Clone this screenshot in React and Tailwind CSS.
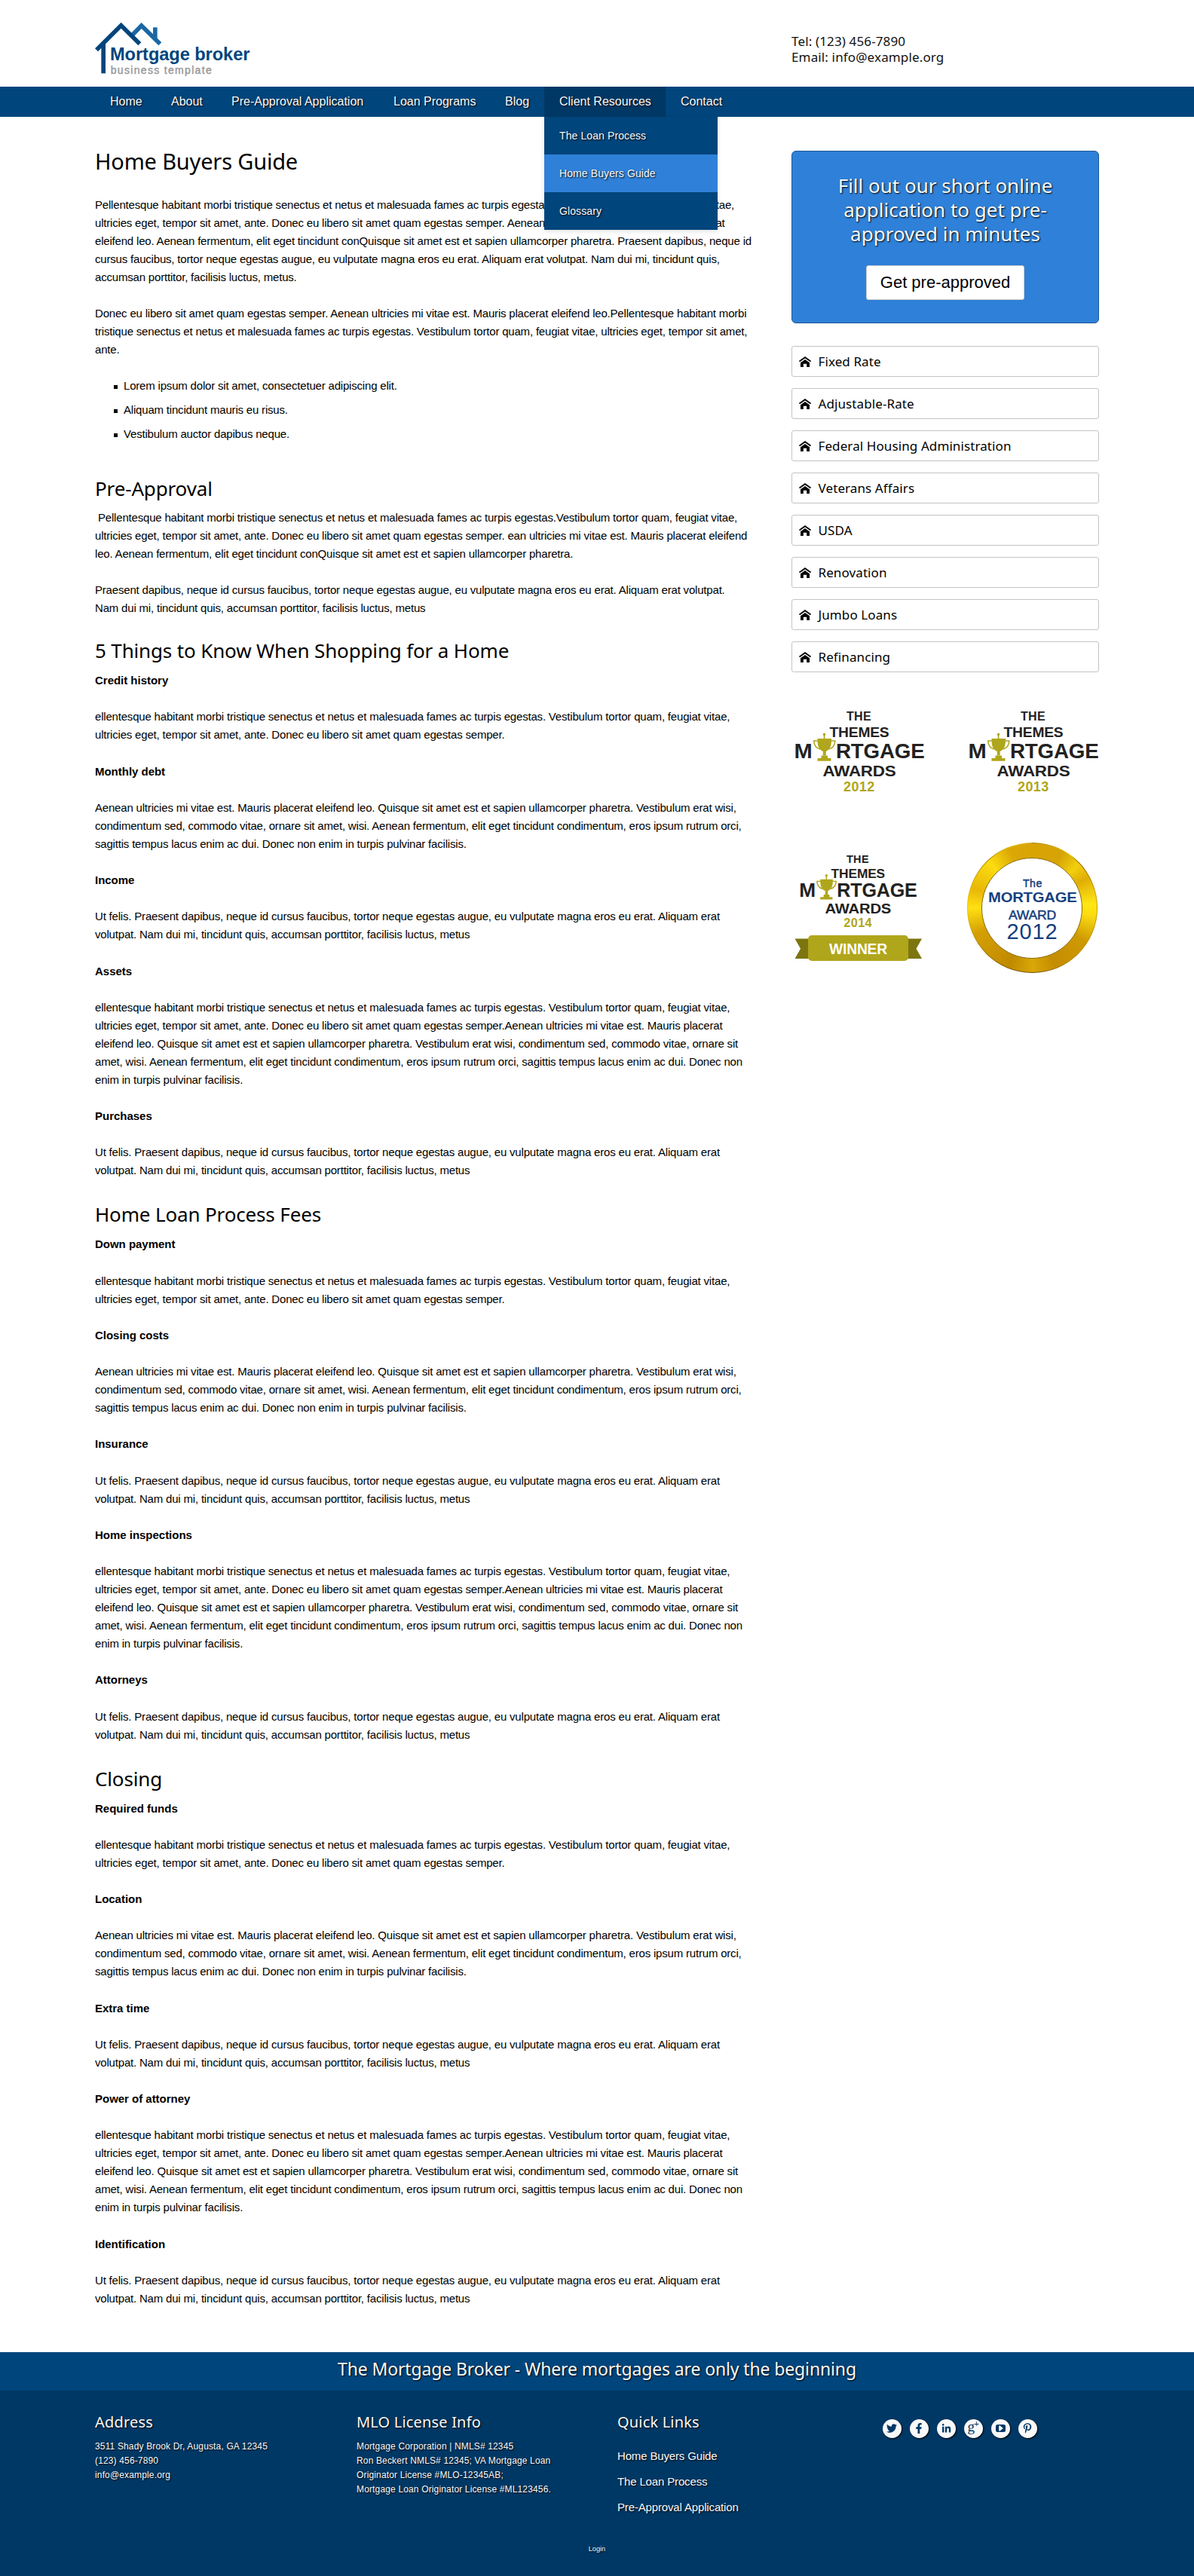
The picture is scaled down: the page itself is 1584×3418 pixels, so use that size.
import React from "react";
import { FaTwitter, FaFacebookF, FaLinkedinIn, FaPinterestP } from "react-icons/fa";

const NAV = [
  { label: "Home", cls: "w-[81px]" },
  { label: "About", cls: "w-[80px]" },
  { label: "Pre-Approval Application", cls: "w-[215px]" },
  { label: "Loan Programs", cls: "w-[148px]" },
  { label: "Blog", cls: "w-[72px]" },
  { label: "Client Resources", cls: "w-[161px] bg-[#003865]", open: true },
  { label: "Contact", cls: "w-[97px]" },
];

const FAMES = [
  "ellentesque habitant morbi tristique senectus et netus et malesuada fames ac turpis egestas. Vestibulum tortor quam, feugiat vitae,",
  "ultricies eget, tempor sit amet, ante. Donec eu libero sit amet quam egestas semper.",
];
const AENEAN = [
  "Aenean ultricies mi vitae est. Mauris placerat eleifend leo. Quisque sit amet est et sapien ullamcorper pharetra. Vestibulum erat wisi,",
  "condimentum sed, commodo vitae, ornare sit amet, wisi. Aenean fermentum, elit eget tincidunt condimentum, eros ipsum rutrum orci,",
  "sagittis tempus lacus enim ac dui. Donec non enim in turpis pulvinar facilisis.",
];
const FELIS = [
  "Ut felis. Praesent dapibus, neque id cursus faucibus, tortor neque egestas augue, eu vulputate magna eros eu erat. Aliquam erat",
  "volutpat. Nam dui mi, tincidunt quis, accumsan porttitor, facilisis luctus, metus",
];
const LONG = [
  "ellentesque habitant morbi tristique senectus et netus et malesuada fames ac turpis egestas. Vestibulum tortor quam, feugiat vitae,",
  "ultricies eget, tempor sit amet, ante. Donec eu libero sit amet quam egestas semper.Aenean ultricies mi vitae est. Mauris placerat",
  "eleifend leo. Quisque sit amet est et sapien ullamcorper pharetra. Vestibulum erat wisi, condimentum sed, commodo vitae, ornare sit",
  "amet, wisi. Aenean fermentum, elit eget tincidunt condimentum, eros ipsum rutrum orci, sagittis tempus lacus enim ac dui. Donec non",
  "enim in turpis pulvinar facilisis.",
];
const BODIES = [FAMES, AENEAN, FELIS, LONG, FELIS];

const SECTIONS = [
  { title: "5 Things to Know When Shopping for a Home", cls: "mt-[26px]", items: ["Credit history", "Monthly debt", "Income", "Assets", "Purchases"] },
  { title: "Home Loan Process Fees", cls: "mt-7", items: ["Down payment", "Closing costs", "Insurance", "Home inspections", "Attorneys"] },
  { title: "Closing", cls: "mt-7", items: ["Required funds", "Location", "Extra time", "Power of attorney", "Identification"] },
];

const PROGRAMS = ["Fixed Rate", "Adjustable-Rate", "Federal Housing Administration", "Veterans Affairs", "USDA", "Renovation", "Jumbo Loans", "Refinancing"];

const SHADOW = "[text-shadow:1px_1px_2px_#000]";

function Logo() {
  return (
    <svg width="214" height="73" viewBox="78 84 642 219" className="block" fontFamily="Liberation Sans, sans-serif">
      <g fill="none" strokeWidth="17">
        <path d="M228 138 263 102 337 175" stroke="#1a67a5" />
        <path d="M317.500 109V158" stroke="#1a67a5" />
        <path d="M84 199 182 101 256 175" stroke="#00457c" />
        <path d="M111.500 174V292" stroke="#00457c" />
      </g>
      <text x="138" y="241" fontSize="70" fontWeight="700" fill="#00457c" textLength="556" lengthAdjust="spacingAndGlyphs">Mortgage broker</text>
      <text x="140" y="293" fontSize="42" fill="#999" stroke="#999" strokeWidth="1.2" textLength="402">business template</text>
    </svg>
  );
}

function Lines({ lines, className = "" }) {
  return (
    <p className={"whitespace-nowrap " + className}>
      {lines.map((l, i) => (
        <span key={i} className="block">{l}</span>
      ))}
    </p>
  );
}

function H2({ children, className }) {
  return <h2 className={"font-['Noto_Sans',sans-serif] text-[26px] leading-9 tracking-[-0.15px] " + className}>{children}</h2>;
}

function HouseIcon() {
  return (
    <svg width="16" height="14" viewBox="0 0 16 14" className="block">
      <path d="M.5 6.600 8 1.200l7.500 5.400" fill="none" stroke="#000" strokeWidth="1.900" />
      <path d="M2 8.300 8 4l6 4.300V14h-3.800v-4.200H5.800V14H2z" fill="#000" />
    </svg>
  );
}

function AwardArt({ year }) {
  return (
    <g fontWeight="700" fill="#222">
      <text x="68" y="16" fontSize="16" textLength="32.500">THE</text>
      <text x="45.500" y="38" fontSize="19" textLength="79" lengthAdjust="spacingAndGlyphs">THEMES</text>
      <text x="-1.500" y="65.700" fontSize="27.500" textLength="24" lengthAdjust="spacingAndGlyphs">M</text>
      <text x="54" y="65.700" fontSize="27.500" textLength="117.500" lengthAdjust="spacingAndGlyphs">RTGAGE</text>
      <text x="36.500" y="89.700" fontSize="21" textLength="97" lengthAdjust="spacingAndGlyphs">AWARDS</text>
      <text x="64" y="109.700" fontSize="18" fill="#b0a61c" textLength="41">{year}</text>
      <g fill="#b0a61c">
        <circle cx="38.500" cy="34.500" r="1.800" />
        <rect x="37.700" y="35" width="1.700" height="6" />
        <path d="M29.500 40h18.500c.3 9-1.500 14.500-7.300 17v5.500h-3.900V57c-5.800-2.500-7.600-8-7.300-17z" />
        <path d="M31 43h-6.300c.3 6.500 3 9.600 8 11M46.500 43h6.300c-.3 6.500-3 9.600-8 11" fill="none" stroke="#b0a61c" strokeWidth="1.600" />
        <path d="M34.500 62.500h8.500v3.500h4.500v3.800H29.500V66h5z" />
      </g>
    </g>
  );
}

function Award({ year, winner }) {
  return (
    <svg width="177" height={winner ? 176 : 120} viewBox={winner ? "0 0 177 176" : "0 0 177 120"} className="block overflow-visible" fontFamily="Liberation Sans, sans-serif">
      {winner ? (
        <>
          <g transform="translate(6.500 10.500) scale(.904)">
            <AwardArt year={year} />
          </g>
          <path d="M-.5 125.500H20v26.500H-.5l7.500-13.200zM168 125.500H148v26.500h20l-7.500-13.200z" fill="#7d750f" />
          <rect x="17" y="121" width="133" height="34" rx="5" fill="#b0a61c" />
          <text x="45" y="145.700" fontSize="19.500" fontWeight="700" fill="#fff" textLength="77" lengthAdjust="spacingAndGlyphs">WINNER</text>
        </>
      ) : (
        <AwardArt year={year} />
      )}
    </svg>
  );
}

function Medal() {
  return (
    <div className="w-[173px] h-[173px] rounded-full p-px bg-[conic-gradient(#a87a00,#e6c400_10%,#8a6400_13%,#caa000_22%,#b98a00_40%,#6e4f00_50%,#9a7000_62%,#e8c800_75%,#b98c00_88%,#e8cc20_96%,#c8a010)]">
      <div className="h-full rounded-full p-[18.500px] bg-[conic-gradient(#d9a404,#d6a406_8%,#f2cf0e_13%,#e0ad06_17%,#ffe714_24%,#fbdc10_27%,#cf9902_34%,#c48d02_44%,#d9a806_50%,#c08a00_56%,#cb9502_62%,#d49e04_68%,#ffe012_75%,#e8b808_80%,#fbdc10_88%,#dba806_94%,#d9a404)]">
        <div className="h-full rounded-full border-[1.500px] border-[#8a6a08] bg-white overflow-hidden">
          <svg viewBox="1303 1138.300 132 132" className="block w-full h-full" fill="#15407f" fontFamily="Liberation Sans, sans-serif">
            <text x="1357" y="1176.700" fontSize="14" stroke="#15407f" strokeWidth=".5" textLength="25">The</text>
            <text x="1311" y="1196" fontSize="18.500" fontWeight="700" textLength="117.500" lengthAdjust="spacingAndGlyphs">MORTGAGE</text>
            <text x="1338" y="1219" fontSize="17" stroke="#15407f" strokeWidth=".5" textLength="63" lengthAdjust="spacingAndGlyphs">AWARD</text>
            <text x="1335.500" y="1245" fontSize="29" textLength="67">2012</text>
          </svg>
        </div>
      </div>
    </div>
  );
}

function GooglePlus() {
  return (
    <span className="font-['Liberation_Serif',serif] text-[19px] leading-none -mt-1.5 flex">
      g<span className="text-[12px] font-bold -ml-px">+</span>
    </span>
  );
}

function YouTube() {
  return (
    <svg width="13" height="10" viewBox="0 0 13 10">
      <rect width="13" height="10" rx="2.500" fill="currentColor" />
      <path d="M4.700 1.800h.6l4 3.200-4 3.200h-.6z" fill="#f9f9f9" stroke="#f9f9f9" />
    </svg>
  );
}

const SOCIAL = [
  <FaTwitter size={14} />,
  <FaFacebookF size={14} />,
  <FaLinkedinIn size={13} />,
  <GooglePlus />,
  <YouTube />,
  <FaPinterestP size={14} />,
];

function FooterHead({ children }) {
  return <h3 className="font-['Noto_Sans',sans-serif] text-[20px] leading-7 tracking-[0.18px]">{children}</h3>;
}

export default function App() {
  return (
    <div className="w-[1584px] h-[3418px] bg-white text-black font-['Liberation_Sans',Arial,sans-serif] text-[15px] leading-6 tracking-[-0.19px] overflow-hidden">
      <header className="h-[115px] pl-[126px] flex">
        <div className="w-[924px] pt-7">
          <Logo />
        </div>
        <div className="pt-[44px] font-['Noto_Sans',sans-serif] text-[17px] leading-[21px] tracking-[0.14px] text-[#111]">
          <div>Tel: (123) 456-7890</div>
          <div>Email: info@example.org</div>
        </div>
      </header>

      <nav className="h-10 bg-[#00457c] pl-[126px] flex text-[#f9f9f9] text-[16px] leading-[39px] tracking-normal">
        {NAV.map((n) => (
          <div key={n.label} className={"relative h-10 pl-5 whitespace-nowrap " + n.cls}>
            <span className={SHADOW}>{n.label}</span>
            {n.open && (
              <div className="absolute left-0 top-10 w-[230px] z-10 text-[14px] leading-[50px] tracking-[0.1px] [text-shadow:1px_1px_2px_#000] bg-[#00457c] shadow-[0_2px_6px_rgba(0,0,0,0.12)]">
                <div className="h-[50px] px-5">The Loan Process</div>
                <div className="h-[50px] px-5 bg-[#2f80d8]">Home Buyers Guide</div>
                <div className="h-[50px] px-5">Glossary</div>
              </div>
            )}
          </div>
        ))}
      </nav>

      <div className="h-[2966px] pl-[126px] flex">
        <main className="w-[924px] pt-[39px]">
          <h1 className="font-['Noto_Sans',sans-serif] text-[29px] leading-10 tracking-[-0.18px]">Home Buyers Guide</h1>
          <Lines
            className="mt-[26px]"
            lines={[
              "Pellentesque habitant morbi tristique senectus et netus et malesuada fames ac turpis egestas.Vestibulum tortor quam, feugiat vitae,",
              "ultricies eget, tempor sit amet, ante. Donec eu libero sit amet quam egestas semper. Aenean ultricies mi vitae est. Mauris placerat",
              "eleifend leo. Aenean fermentum, elit eget tincidunt conQuisque sit amet est et sapien ullamcorper pharetra. Praesent dapibus, neque id",
              "cursus faucibus, tortor neque egestas augue, eu vulputate magna eros eu erat. Aliquam erat volutpat. Nam dui mi, tincidunt quis,",
              "accumsan porttitor, facilisis luctus, metus.",
            ]}
          />
          <Lines
            className="mt-6"
            lines={[
              "Donec eu libero sit amet quam egestas semper. Aenean ultricies mi vitae est. Mauris placerat eleifend leo.Pellentesque habitant morbi",
              "tristique senectus et netus et malesuada fames ac turpis egestas. Vestibulum tortor quam, feugiat vitae, ultricies eget, tempor sit amet,",
              "ante.",
            ]}
          />
          <ul className="mt-6 pl-[25px] flex flex-col gap-2">
            {["Lorem ipsum dolor sit amet, consectetuer adipiscing elit.", "Aliquam tincidunt mauris eu risus.", "Vestibulum auctor dapibus neque."].map((t) => (
              <li key={t} className="flex items-center gap-[8px]">
                <span className="w-[5px] h-[5px] bg-black mt-[3px]" />
                {t}
              </li>
            ))}
          </ul>

          <H2 className="mt-[42px] mb-[9px]">Pre-Approval</H2>
          <Lines
            lines={[
              "\u00a0Pellentesque habitant morbi tristique senectus et netus et malesuada fames ac turpis egestas.Vestibulum tortor quam, feugiat vitae,",
              "ultricies eget, tempor sit amet, ante. Donec eu libero sit amet quam egestas semper. ean ultricies mi vitae est. Mauris placerat eleifend",
              "leo. Aenean fermentum, elit eget tincidunt conQuisque sit amet est et sapien ullamcorper pharetra.",
            ]}
          />
          <Lines
            className="mt-6"
            lines={[
              "Praesent dapibus, neque id cursus faucibus, tortor neque egestas augue, eu vulputate magna eros eu erat. Aliquam erat volutpat.",
              "Nam dui mi, tincidunt quis, accumsan porttitor, facilisis luctus, metus",
            ]}
          />

          {SECTIONS.map((s) => (
            <section key={s.title}>
              <H2 className={"mb-2.5 " + s.cls}>{s.title}</H2>
              <div className="flex flex-col gap-[24.25px]">
                {s.items.map((t, i) => (
                  <div key={t}>
                    <h4 className="font-bold tracking-[-0.02px]">{t}</h4>
                    <Lines className="mt-[24.25px]" lines={BODIES[i]} />
                  </div>
                ))}
              </div>
            </section>
          ))}
        </main>

        <aside className="w-[408px] pt-[45px]">
          <div className="h-[229px] rounded-[6px] border border-[#1b5796] bg-[#2f80d8] pt-[29px] text-center">
            <div className="font-['Noto_Sans',sans-serif] text-[26px] leading-8 tracking-normal text-[#f9f9f9] [text-shadow:1px_1px_2px_#000]">
              <div>Fill out our short online</div>
              <div>application to get pre-</div>
              <div>approved in minutes</div>
            </div>
            <button className="mt-[26px] w-[210px] h-[46px] bg-white border border-[#ccc] rounded-[3px] text-[22px] tracking-normal leading-[42px]">Get pre-approved</button>
          </div>

          <ul className="mt-[30px] flex flex-col gap-[15px] font-['Noto_Sans',sans-serif] text-[17px] tracking-[0.1px]">
            {PROGRAMS.map((p) => (
              <li key={p} className="h-[41px] border border-[#c4c4c4] rounded-[3px] pl-[9px] flex items-center gap-[9.500px]">
                <HouseIcon />
                {p}
              </li>
            ))}
          </ul>

          <div className="mt-[48px] pl-[4.500px] grid grid-cols-[231px_173px]">
            <div className="h-[173px]"><Award year="2012" /></div>
            <div className="h-[173px]"><Award year="2013" /></div>
            <div className="pt-[7px]"><Award year="2014" winner /></div>
            <div className="pt-[5px] -ml-[2.700px]"><Medal /></div>
          </div>
        </aside>
      </div>

      <footer className="text-[#f9f9f9] [text-shadow:1px_1px_2px_#000]">
        <div className="h-[51px] bg-[#00457c] text-center font-['Noto_Sans',sans-serif] text-[23px] leading-11 tracking-[-0.13px]">
          The Mortgage Broker - Where mortgages are only the beginning
        </div>
        <div className="h-[246px] bg-[#003865]">
          <div className="h-[200px] pl-[126px] pt-[28px] grid grid-cols-[347px_346px_352px_300px] text-[12px] leading-[19px] tracking-[0.15px]">
            <div>
              <FooterHead>Address</FooterHead>
              <div className="mt-[9px]">3511 Shady Brook Dr, Augusta, GA 12345</div>
              <div>(123) 456-7890</div>
              <div>info@example.org</div>
            </div>
            <div>
              <FooterHead>MLO License Info</FooterHead>
              <div className="mt-[9px]">Mortgage Corporation | NMLS# 12345</div>
              <div>Ron Beckert NMLS# 12345; VA Mortgage Loan</div>
              <div>Originator License #MLO-12345AB;</div>
              <div>Mortgage Loan Originator License #ML123456.</div>
            </div>
            <div>
              <FooterHead>Quick Links</FooterHead>
              <div className="mt-[14px] text-[15px] leading-[34px] tracking-[-0.15px]">
                <div>Home Buyers Guide</div>
                <div>The Loan Process</div>
                <div>Pre-Approval Application</div>
              </div>
            </div>
            <div className="pt-[10px] flex gap-[11.500px] [text-shadow:none] text-[#003865]">
              {SOCIAL.map((icon, i) => (
                <span key={i} className="w-[24.500px] h-[24.500px] rounded-full bg-[#f9f9f9] flex items-center justify-center shadow-[1px_1px_2px_#000]">
                  {icon}
                </span>
              ))}
            </div>
          </div>
          <div className="text-center text-[9.200px] leading-[21px] tracking-normal">Login</div>
        </div>
      </footer>
    </div>
  );
}
